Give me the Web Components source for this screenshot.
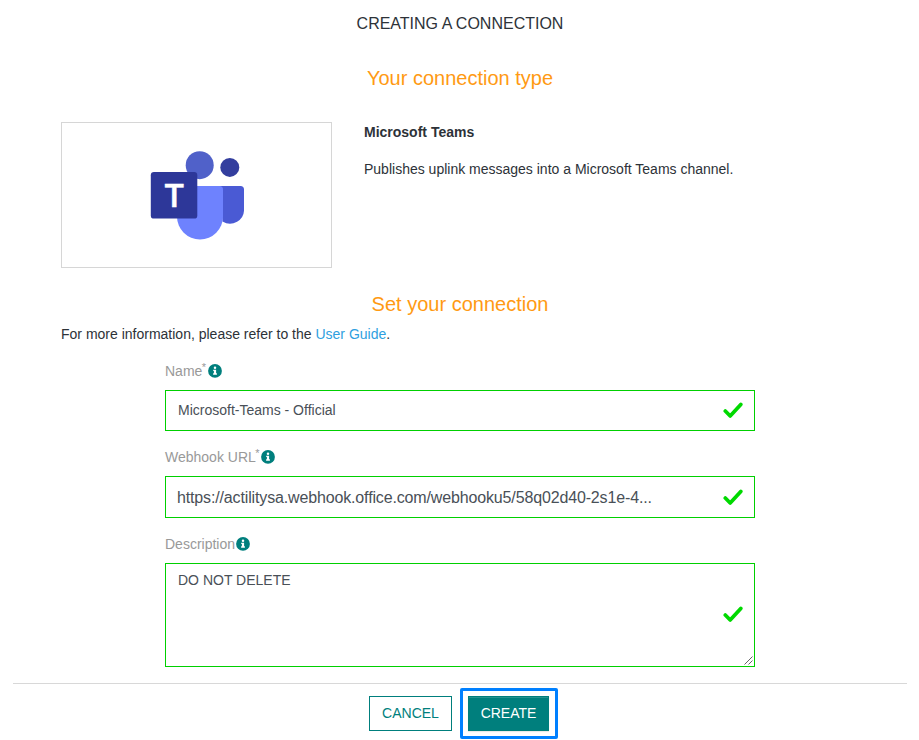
<!DOCTYPE html>
<html lang="en">
<head>
<meta charset="utf-8">
<title>Creating a connection</title>
<style>
html,body{margin:0;background:#fff}
body{font-family:"Liberation Sans",Arial,sans-serif;font-size:14px;color:#2d3238;height:740px;overflow:hidden}
</style>
</head>
<body>
<connection-page></connection-page>
<script>
const define = (name, html) => {
  const t = document.createElement('template');
  t.innerHTML = html;
  customElements.define(name, class extends HTMLElement {
    constructor() {
      super();
      this.attachShadow({mode: 'open'}).append(t.content.cloneNode(true));
    }
  });
};

define('section-title', `<style>
:host{display:block;text-align:center;color:#ff9a13;font-size:20px;line-height:24px;padding-left:1px}
</style><slot></slot>`);

define('teams-logo', `<style>:host{display:block;width:94px;height:90px}svg{display:block}</style>
<svg width="94" height="90" viewBox="150 150 94 90">
<circle cx="199.700" cy="165.200" r="14" fill="#5061c9"/>
<circle cx="229.800" cy="167.400" r="9.500" fill="#333e9e"/>
<path d="M220 186h20.500q3.500 0 3.500 3.500V209a14 14 0 0 1-21.500 12.500z" fill="#4a5ad4"/>
<path d="M181 186h38.500q3.500 0 3.500 3.500V216.500a23 23 0 0 1-46 0V190z" fill="#6e82fe"/>
<rect x="150.800" y="172" width="46.500" height="46.600" rx="3.200" fill="#2d3799"/>
<text transform="translate(174.100 207) scale(1.060 1)" text-anchor="middle" font-family="Open Sans, sans-serif" font-size="32.500" font-weight="600" fill="#fff" stroke="#fff" stroke-width=".3">T</text>
</svg>`);

define('type-card', `<style>
:host{display:flex;align-items:flex-start;gap:32px}
.box{box-sizing:border-box;width:271px;height:146px;border:1px solid #d6d6d6;display:flex;padding:27px 0 0 88px}
.info{padding-top:1px}
b,p{display:block;margin:0;line-height:18px}
p{margin-top:19px}
</style><div class="box"><teams-logo></teams-logo></div>
<div class="info"><b><slot name="name"></slot></b><p><slot></slot></p></div>`);

define('info-icon', `<style>:host{display:block;width:14px;height:14px}svg{display:block}</style>
<svg width="14" height="14" viewBox="0 0 14 14"><circle cx="7" cy="6.900" r="6.900" fill="#007f7d"/><circle cx="7" cy="3.800" r="1.250" fill="#fff"/><path d="M5.200 5.700h2.900v3.600h.8v1.400H5.100V9.300h.8V7.100h-.7z" fill="#fff"/></svg>`);

define('check-mark', `<style>:host{display:block;width:20px;height:18px}svg{display:block}</style>
<svg width="20" height="18" viewBox="0 0 20 18"><path d="M2.300 9L7.200 14 17.800 2.400" fill="none" stroke="#00d900" stroke-width="3.700" stroke-linecap="round" stroke-linejoin="round"/></svg>`);

define('form-field', `<style>
:host{display:block}
.label{display:flex;height:18px;line-height:18px;color:#999}
.req{font-size:11px;line-height:12px;margin:-1px 0 0 -.5px}
info-icon{margin:2px 0 0 1.700px}
.box{box-sizing:border-box;border:1px solid #00d000;margin-top:10px;height:var(--h,41px);display:flex;justify-content:space-between;padding:0 11px 0 var(--pad,12px);color:#495057;position:relative}
.value{line-height:18px;margin-top:var(--text-top,10px);font-size:var(--size,14px);letter-spacing:var(--track,0);white-space:nowrap}
check-mark{margin-top:var(--check-top,11px)}
.grip{position:absolute;right:1px;bottom:1px;display:none}
:host([multiline]) .grip{display:block}
</style>
<div class="label"><span><slot name="label"></slot></span><span class="req"><slot name="req"></slot></span><info-icon></info-icon></div>
<div class="box"><span class="value"><slot></slot></span><check-mark></check-mark>
<svg class="grip" width="9" height="9" viewBox="0 0 9 9"><path d="M.5 8.500l8-8M4.500 8.500l4-4" stroke="#555" stroke-width=".9"/></svg></div>`);

define('action-button', `<style>
:host{display:block;box-sizing:border-box}
button{display:block;box-sizing:border-box;width:83px;height:35px;padding:0;border:1px solid #007f7d;background:#fff;color:#007f7d;font:14px/33px "Liberation Sans",Arial,sans-serif}
:host([primary]){border:3px solid #0080ff;border-radius:2px;padding:5px 6px 5px 5px;width:98px;height:51px}
:host([primary]) button{width:81px;background:#007f7d;color:#fff;box-shadow:0 1px 1px rgba(0,0,0,.08),inset 0 1px 0 rgba(255,255,255,.15)}
</style><button><slot></slot></button>`);

define('connection-page', `<style>
:host{display:block;box-sizing:border-box;width:919px;height:740px;padding-top:15px}
h1{margin:0 0 0 1px;text-align:center;font-size:16px;font-weight:400;line-height:18px}
.type{margin-top:33px}
type-card{margin:32px 0 0 61px}
.set{margin-top:24px}
.note{margin:9px 0 0 61px;line-height:18px}
a{color:#2f9fe0;text-decoration:none}
form{width:590px;margin:19px 0 0 165px}
form-field+form-field{margin-top:17px}
.url{--h:42px;--size:16px;--pad:11px;--text-top:12px;--check-top:12px;--track:-.146px}
.desc{--h:104px;--text-top:7px;--check-top:42px}
footer{border-top:1px solid #d8d8d8;margin:16px 12px 0 13px;padding:4px 0 0 356px;display:flex;gap:8px}
.cancel{margin-top:8px}
</style>
<h1>CREATING A CONNECTION</h1>
<section-title class="type">Your connection type</section-title>
<type-card><span slot="name">Microsoft Teams</span>Publishes uplink messages into a Microsoft Teams channel.</type-card>
<section-title class="set">Set your connection</section-title>
<div class="note">For more information, please refer to the <a>User Guide</a>.</div>
<form>
<form-field><span slot="label">Name</span><span slot="req">*</span>Microsoft-Teams - Official</form-field>
<form-field class="url"><span slot="label">Webhook URL</span><span slot="req">*</span>https://actilitysa.webhook.office.com/webhooku5/58q02d40-2s1e-4...</form-field>
<form-field class="desc" multiline><span slot="label">Description</span>DO NOT DELETE</form-field>
</form>
<footer><action-button class="cancel">CANCEL</action-button><action-button primary>CREATE</action-button></footer>`);
</script>
</body>
</html>
